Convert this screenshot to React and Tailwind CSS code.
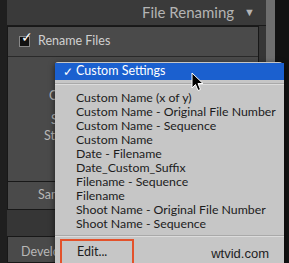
import React from 'react';

const items = [
  'Custom Name (x of y)',
  'Custom Name - Original File Number',
  'Custom Name - Sequence',
  'Custom Name',
  'Date - Filename',
  'Date_Custom_Suffix',
  'Filename - Sequence',
  'Filename',
  'Shoot Name - Original File Number',
  'Shoot Name - Sequence',
];

const font = { fontFamily: 'Lato, "Open Sans", sans-serif' };

export default function App() {
  return (
    <div className="relative w-[289px] h-[263px] overflow-hidden bg-[#141414] flex" style={font}>
      <div className="w-[7px] bg-[#1f1f1f]" />
      <div className="w-[259px] bg-[#363636] flex flex-col">
        <div className="h-[27px] flex items-center justify-end pr-[11px] bg-[#3a3a3a] border-b border-[#1a1a1a]">
          <span className="text-[15px] text-[#b4b4b4]">File Renaming</span>
          <span className="ml-[10px] text-[11px] text-[#b4b4b4]">▼</span>
        </div>
        <div className="w-[252px] border border-[#181818] bg-[#4a4a4a] flex flex-col">
          <div className="h-[30px] flex items-center pl-[11px] border-b border-[#2a2a2a]">
            <div className="w-[11px] h-[11px] bg-[#111] border border-[#888] relative">
              <span className="absolute -top-[7px] left-[1px] text-[14px] leading-none text-white">✓</span>
            </div>
            <span className="ml-[8px] text-[12.5px] text-[#d0d0d0] whitespace-nowrap">Rename Files</span>
          </div>
          <div className="h-[124px] flex flex-col text-[12.5px] text-[#b8b8b8] pt-[30px] whitespace-nowrap">
            <div className="h-[26px] pl-[41px]">Custom Text</div>
            <div className="h-[14px] pl-[43px] -mt-[2px]">Shoot Name</div>
            <div className="h-[14px] pl-[36px] mt-[2px]">Start Number</div>
          </div>
        </div>
        <div className="w-[252px] h-[30px] border border-t-0 border-[#181818] bg-[#4a4a4a] flex items-center pl-[30px] text-[12.5px] text-[#b8b8b8]">
          Sample
        </div>
        <div className="h-[28px]" />
        <div className="w-[252px] flex-1 border border-[#181818] bg-[#4a4a4a] pl-[13px] pt-[6px] text-[12.5px] text-[#b8b8b8] whitespace-nowrap">
          Develop Settings
        </div>
      </div>
      <div className="w-[9px] bg-[#6e6e6e]" />
      <div className="flex-1 bg-[#121212]" />

      <div className="absolute left-[55px] top-[62px] w-[229px] h-[210px] bg-[#c6c6c6] rounded-tr-[5px] rounded-tl-[3px] shadow-[0_2px_6px_rgba(0,0,0,0.6)] flex flex-col pt-[1px] whitespace-nowrap">
        <div className="h-[17px] bg-[#1b60cf] flex items-center text-white text-[12.5px]">
          <span className="w-[21px] pl-[8px] text-[12px]">✓</span>
          <span>Custom Settings</span>
        </div>
        <div className="h-[3px]" />
        <div className="h-[2px] border-t border-[#a9a9a9] border-b border-b-[#dcdcdc]" />
        <div className="h-[6px]" />
        {items.map((t) => (
          <div key={t} className="h-[14px] leading-[14px] pl-[21px] text-[12.3px] text-[#1c1c1c]">
            {t}
          </div>
        ))}
        <div className="h-[4px]" />
        <div className="h-[2px] border-t border-[#a9a9a9] border-b border-b-[#dcdcdc]" />
        <div className="relative h-[30px] flex items-center">
          <div className="absolute left-[5px] top-[2px] w-[74px] h-[30px] border-2 border-[#e3522b]" />
          <span className="pl-[22px] text-[12.5px] text-[#1c1c1c]">Edit...</span>
          <span className="ml-auto mr-[15px] mt-[4px] text-[13px] text-[#222]" style={{ fontFamily: '"Liberation Sans", Arial, sans-serif' }}>
            wtvid.com
          </span>
        </div>
      </div>

      <svg className="absolute left-[191px] top-[72px]" width="14" height="21" viewBox="0 0 14 21">
        <path d="M1 1 L1 16 L4.5 12.5 L7 18.5 L9.5 17.5 L7 11.5 L12 11.5 Z" fill="#000" stroke="#fff" strokeWidth="1" />
      </svg>
    </div>
  );
}
